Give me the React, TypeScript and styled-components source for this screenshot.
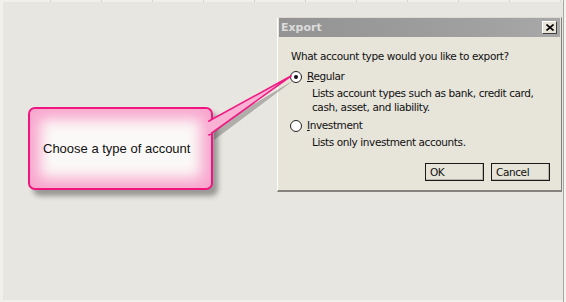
import React from "react";
import styled, {createGlobalStyle} from "styled-components";

const GlobalStyle = createGlobalStyle`
  html, body {
    margin: 0;
    padding: 0;
    background: #e8e6e0;
  }
`

const Desktop = styled.div`
  position: relative;
  width: 566px;
  height: 302px;
  overflow: hidden;
  background: #e8e6e0;
  box-shadow: inset 3px 2px 0 #f1f0ec, inset 0 -2px 0 #f1f0ec;
  font-family: "DejaVu Sans", Tahoma, sans-serif;
`

const GridTicks = styled.div`
  position: absolute;
  top: 0;
  left: 0;
  right: 0;
  height: 2px;
  background: repeating-linear-gradient(to right, transparent 0 50px, #d6d4ce 50px 51px);
`

const RightColumn = styled.div`
  position: absolute;
  top: 0;
  right: 0;
  width: 2px;
  height: 100%;
  background: #f4f3f0;
  border-left: 1px solid #a9a7a1;
`

const Window = styled.div`
  position: absolute;
  left: 277px;
  top: 17px;
  width: 285px;
  height: 175px;
  box-sizing: border-box;
  background: #e7e4da;
  border-top: 1px solid #dcdad3;
  border-left: 1px solid #ffffff;
  border-right: 1px solid #7f7f7f;
  border-bottom: 2px solid #858380;
  display: flex;
  flex-direction: column;
`

const TitleBar = styled.div`
  height: 19px;
  margin: 0 1px;
  display: flex;
  align-items: center;
  justify-content: space-between;
  padding: 0 3px 0 2px;
  background: linear-gradient(to right, #939393, #a0a0a0 70%, #a8a8a8);
`

const Title = styled.span`
  font-size: 11px;
  font-weight: bold;
  color: #dcdcdc;
`

const CloseButton = styled.div`
  width: 15px;
  height: 13px;
  box-sizing: border-box;
  background: #e7e4da;
  border: 1px solid;
  border-color: #ffffff #404040 #404040 #ffffff;
  display: flex;
  align-items: center;
  justify-content: center;
`

const Body = styled.div`
  flex: 1;
  display: flex;
  flex-direction: column;
  padding: 13px 11px 0 13px;
  font-size: 10.5px;
  letter-spacing: -0.4px;
  line-height: 13px;
  color: #111;
`

const Question = styled.div`
  margin-bottom: 7px;
`

const OptionRow = styled.div`
  display: flex;
  align-items: center;
  gap: 5px;
`

const Radio = styled.span<{checked?: boolean}>`
  width: 10px;
  height: 10px;
  margin-left: -1px;
  border-radius: 50%;
  border: 1px solid #222;
  background: #fff;
  display: flex;
  align-items: center;
  justify-content: center;
  &::after {
    content: "";
    width: 4px;
    height: 4px;
    border-radius: 50%;
    background: ${p => p.checked ? '#111' : 'transparent'};
  }
`

const Description = styled.div<{gapAfter: number}>`
  margin: 3px 0 ${p => p.gapAfter}px 21px;
  line-height: 14px;
`

const Buttons = styled.div`
  display: flex;
  justify-content: flex-end;
  gap: 7px;
`

const Button = styled.div`
  width: 59px;
  height: 18px;
  box-sizing: border-box;
  border: 1px solid #1a1a1a;
  background: #e6e3d8;
  display: flex;
  align-items: center;
  padding-left: 4px;
  box-shadow: inset -1px -1px 0 #b8b5ab;
`

const Callout = styled.div`
  position: absolute;
  left: 28px;
  top: 107px;
  width: 185px;
  height: 83px;
  box-sizing: border-box;
  border: 2px solid #f0157f;
  border-radius: 7px;
  background: #fbf9f7;
  box-shadow: inset 0 0 14px 10px #f8a6cd, 5px 6px 5px rgba(60, 60, 60, 0.45);
  display: flex;
  align-items: center;
  padding-left: 13px;
  font-family: "Liberation Sans", Arial, sans-serif;
  font-size: 13px;
  color: #111;
`

const Pointer = styled.svg`
  position: absolute;
  left: 0;
  top: 0;
  width: 566px;
  height: 302px;
  pointer-events: none;
`

const Underlined = styled.span`
  text-decoration: underline;
`

const App = () => {
  return (
      <Desktop>
        <GlobalStyle/>
        <GridTicks/>
        <RightColumn/>
        <Window>
          <TitleBar>
            <Title>Export</Title>
            <CloseButton>
              <svg width="8" height="7" viewBox="0 0 8 7">
                <path d="M0.5 0.5 L7.5 6.5 M7.5 0.5 L0.5 6.5" stroke="#000" strokeWidth="1.6"/>
              </svg>
            </CloseButton>
          </TitleBar>
          <Body>
            <Question>What account type would you like to export?</Question>
            <OptionRow>
              <Radio checked/>
              <span><Underlined>R</Underlined>egular</span>
            </OptionRow>
            <Description gapAfter={5}>
              Lists account types such as bank, credit card,<br/>
              cash, asset, and liability.
            </Description>
            <OptionRow>
              <Radio/>
              <span><Underlined>I</Underlined>nvestment</span>
            </OptionRow>
            <Description gapAfter={14}>Lists only investment accounts.</Description>
            <Buttons>
              <Button>OK</Button>
              <Button>Cancel</Button>
            </Buttons>
          </Body>
        </Window>
        <Callout>Choose a type of account</Callout>
        <Pointer viewBox="0 0 566 302">
          <polygon points="214,128 294,80 214,140" fill="rgba(70,70,70,0.35)"/>
          <polygon points="209,121 291,76 209,135" fill="#f9b2d3" stroke="#ef1a82" strokeWidth="1.6" strokeLinejoin="round"/>
          <line x1="209" y1="122" x2="209" y2="134" stroke="#f9b2d3" strokeWidth="3"/>
        </Pointer>
      </Desktop>
  )
}

export default App
